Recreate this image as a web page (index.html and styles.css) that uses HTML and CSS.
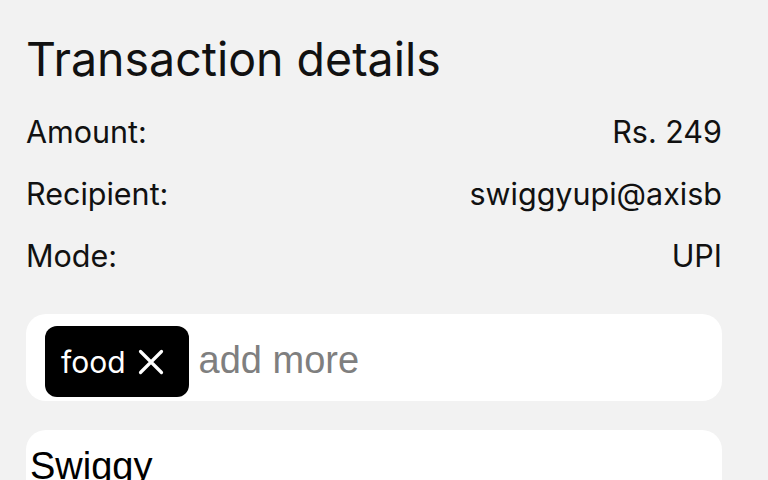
FILE: index.html
```html
<!DOCTYPE html>
<html lang="en">
<head>
    <meta charset="UTF-8">
    <meta name="viewport" content="width=device-width, initial-scale=1.0">
    <title>Transaction details</title>
    <link rel="stylesheet" href="styles.css">
</head>
<body>
    <div class="page">
        <h1 class="title">Transaction details</h1>

        <div class="detail-row">
            <span>Amount:</span>
            <span>Rs. 249</span>
        </div>
        <div class="detail-row">
            <span>Recipient:</span>
            <span>swiggyupi@axisb</span>
        </div>
        <div class="detail-row">
            <span>Mode:</span>
            <span>UPI</span>
        </div>

        <div class="tag-box">
            <div class="tag">
                <span>food</span>
                <svg class="tag-close" width="26" height="26" viewBox="0 0 26 26">
                    <path d="M2.5 2.5 L23.5 23.5 M23.5 2.5 L2.5 23.5" stroke="#fff" stroke-width="3.2" stroke-linecap="round" fill="none"/>
                </svg>
            </div>
            <input class="tag-input" type="text" placeholder="add more">
        </div>

        <div class="name-box">
            <input class="name-input" type="text" value="Swiggy">
        </div>
    </div>
</body>
</html>
```

FILE: styles.css
```css
body {
    margin: 0;
    background-color: #f2f2f2;
    font-family: Inter, "Noto Sans", sans-serif;
    color: #111;
    overflow: hidden;
}

.page {
    padding: 33px 46px 0 26px;
}

.title {
    margin: 0 0 16px 0;
    font-size: 46.5px;
    line-height: 52px;
    font-weight: 400;
}

.detail-row {
    display: flex;
    justify-content: space-between;
    font-size: 30.5px;
    line-height: 62px;
}

/* tag field */
.tag-box {
    margin-top: 27px;
    display: flex;
    align-items: flex-start;
    gap: 10px;
    background-color: #fff;
    border-radius: 20px;
    padding: 12px 19px 4px 19px;
}

.tag {
    display: flex;
    align-items: center;
    gap: 12px;
    height: 71px;
    padding: 0 25px 0 16px;
    box-sizing: border-box;
    background-color: #000;
    color: #fff;
    border-radius: 12px;
    font-size: 30px;
    line-height: 36px;
}

.tag span {
    padding-top: 1px;
}

.tag-close {
    display: block;
}

.tag-input,
.name-input {
    border: none;
    outline: none;
    background: transparent;
    font-family: "Liberation Sans", Arial, sans-serif;
    font-size: 38px;
    color: #000;
    padding: 0;
    min-width: 0;
}

.tag-input {
    flex: 1;
    height: 71px;
    padding-bottom: 2px;
    box-sizing: border-box;
}

.tag-input::placeholder {
    color: #7f7f7f;
}

.name-box {
    margin-top: 29px;
    background-color: #fff;
    border-radius: 20px;
    padding: 15px 4px 20px 4px;
}

.name-input {
    width: 100%;
}
```
